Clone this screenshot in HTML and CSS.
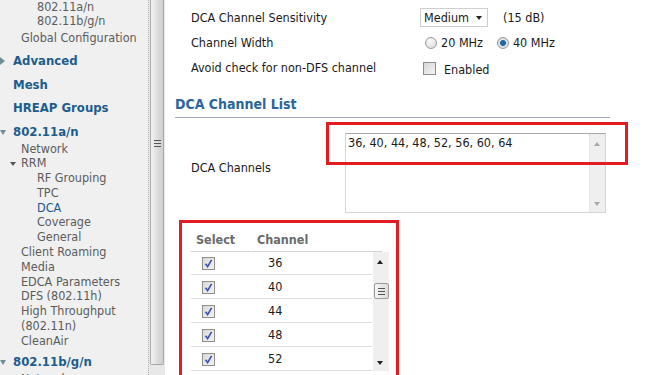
FILE: index.html
```html
<!DOCTYPE html>
<html lang="en">
<head>
    <meta charset="UTF-8">
    <meta name="viewport" content="width=device-width, initial-scale=1.0">
    <title>802.11a/n &gt; RRM &gt; DCA</title>
    <link rel="stylesheet" href="styles.css">
</head>
<body>
    <div class="frame">
        <div class="nav">
            <div class="nav-list">
                <div class="nav-item l3">802.11a/n</div>
                <div class="nav-item l3">802.11b/g/n</div>
                <div class="nav-item l2 global">Global Configuration</div>
                <div class="nav-head first closed">Advanced</div>
                <div class="nav-head">Mesh</div>
                <div class="nav-head">HREAP Groups</div>
                <div class="nav-head open">802.11a/n</div>
                <div class="nav-item l2">Network</div>
                <div class="nav-item l2 sub-open">RRM</div>
                <div class="nav-item l3">RF Grouping</div>
                <div class="nav-item l3">TPC</div>
                <div class="nav-item l3 current">DCA</div>
                <div class="nav-item l3">Coverage</div>
                <div class="nav-item l3">General</div>
                <div class="nav-item l2">Client Roaming</div>
                <div class="nav-item l2">Media</div>
                <div class="nav-item l2">EDCA Parameters</div>
                <div class="nav-item l2">DFS (802.11h)</div>
                <div class="nav-item l2 wrap">High Throughput (802.11n)</div>
                <div class="nav-item l2">CleanAir</div>
                <div class="nav-head open">802.11b/g/n</div>
                <div class="nav-item l2">Network</div>
            </div>
        </div>

        <div class="nav-scroll">
            <div class="nav-thumb"><span class="grip"></span></div>
        </div>

        <div class="main">
            <div class="form-row">
                <div class="label">DCA Channel Sensitivity</div>
                <div class="control">
                    <span class="select">Medium<span class="caret"></span></span>
                    <span class="note">(15 dB)</span>
                </div>
            </div>
            <div class="form-row">
                <div class="label">Channel Width</div>
                <div class="control">
                    <span class="radio"></span><span class="opt">20 MHz</span>
                    <span class="radio checked"></span><span class="opt">40 MHz</span>
                </div>
            </div>
            <div class="form-row">
                <div class="label">Avoid check for non-DFS channel</div>
                <div class="control">
                    <span class="check"></span><span class="opt wide">Enabled</span>
                </div>
            </div>

            <div class="section-title">DCA Channel List</div>

            <div class="channels-row">
                <div class="label">DCA Channels</div>
                <div class="textarea-wrap">
                    <div class="textarea">
                        <div class="ta-text">36, 40, 44, 48, 52, 56, 60, 64</div>
                        <div class="ta-scroll">
                            <span class="arrow up dim"></span>
                            <span class="arrow down dim"></span>
                        </div>
                    </div>
                    <div class="highlight"></div>
                </div>
            </div>

            <div class="channel-box">
                <div class="ch-head">
                    <div class="ch-col sel">Select</div>
                    <div class="ch-col num">Channel</div>
                </div>
                <div class="ch-body">
                    <div class="ch-list">
                        <div class="ch-rows">
                            <div class="ch-row"><div class="sel"><span class="check on"><svg viewBox="0 0 13 13" width="13" height="13"><path d="M3.5 6.8 L5.6 9.6 L9.6 2.8" fill="none" stroke="#3452b4" stroke-width="1.6"/></svg></span></div><div class="num">36</div></div>
                            <div class="ch-row"><div class="sel"><span class="check on"><svg viewBox="0 0 13 13" width="13" height="13"><path d="M3.5 6.8 L5.6 9.6 L9.6 2.8" fill="none" stroke="#3452b4" stroke-width="1.6"/></svg></span></div><div class="num">40</div></div>
                            <div class="ch-row"><div class="sel"><span class="check on"><svg viewBox="0 0 13 13" width="13" height="13"><path d="M3.5 6.8 L5.6 9.6 L9.6 2.8" fill="none" stroke="#3452b4" stroke-width="1.6"/></svg></span></div><div class="num">44</div></div>
                            <div class="ch-row"><div class="sel"><span class="check on"><svg viewBox="0 0 13 13" width="13" height="13"><path d="M3.5 6.8 L5.6 9.6 L9.6 2.8" fill="none" stroke="#3452b4" stroke-width="1.6"/></svg></span></div><div class="num">48</div></div>
                            <div class="ch-row"><div class="sel"><span class="check on"><svg viewBox="0 0 13 13" width="13" height="13"><path d="M3.5 6.8 L5.6 9.6 L9.6 2.8" fill="none" stroke="#3452b4" stroke-width="1.6"/></svg></span></div><div class="num">52</div></div>
                        </div>
                    </div>
                    <div class="ch-scroll">
                        <span class="arrow up"></span>
                        <span class="ch-thumb"><span class="grip"></span></span>
                        <span class="arrow down"></span>
                    </div>
                </div>
            </div>
        </div>
    </div>
</body>
</html>
```

FILE: styles.css
```css
* {
    box-sizing: border-box;
}

html, body {
    margin: 0;
    height: 375px;
    overflow: hidden;
}

body {
    font-family: "DejaVu Sans Condensed", "DejaVu Sans", sans-serif;
    font-size: 12.5px;
    color: #1a1a1a;
    background: #fff;
}

.frame {
    display: flex;
    height: 375px;
}

/* left navigation */
.nav {
    width: 148px;
    flex: none;
    background: #f0f0f0;
    color: #5c5c5c;
    overflow: hidden;
}

.nav-list {
    margin-top: -0.4px;
}

.nav-item {
    line-height: 14.8px;
    position: relative;
}

.nav-item.l2 {
    padding-left: 21px;
}

.nav-item.l3 {
    padding-left: 37px;
}

.nav-item.global {
    margin-top: 2px;
}

.nav-item.current {
    color: #21598c;
}

.nav-item.wrap {
    padding-right: 20px;
}

.nav-item.sub-open::before {
    content: "";
    position: absolute;
    left: 10px;
    top: 6px;
    border-left: 3px solid transparent;
    border-right: 3px solid transparent;
    border-top: 4px solid #555;
}

.nav-head {
    position: relative;
    font-weight: bold;
    font-size: 13px;
    color: #1d5d8d;
    line-height: 20px;
    margin-top: 3.5px;
    padding-left: 13px;
}

.nav-head.first {
    margin-top: 5px;
}

.nav-head.closed::before {
    content: "";
    position: absolute;
    left: 0;
    top: 6px;
    border-top: 4px solid transparent;
    border-bottom: 4px solid transparent;
    border-left: 5px solid #6f8e97;
}

.nav-head.open::before {
    content: "";
    position: absolute;
    left: 0;
    top: 8px;
    border-left: 3.5px solid transparent;
    border-right: 3.5px solid transparent;
    border-top: 5px solid #6f8e97;
}

/* nav frame scrollbar */
.nav-scroll {
    width: 17px;
    flex: none;
    border-left: 1px dotted #b4b4b4;
    background: #e8e8e8;
    padding-left: 1px;
}

.nav-thumb {
    display: flex;
    justify-content: center;
    width: 14px;
    height: 365px;
    padding-top: 140px;
    border: 1px solid #a9a9a9;
    border-top: none;
    border-radius: 0 0 2px 2px;
    background: linear-gradient(to right, #f3f3f3, #dadada 60%, #cfcfcf);
}

.grip {
    display: block;
    width: 7px;
    height: 7px;
    border-top: 1px solid #555;
    border-bottom: 1px solid #555;
    background: linear-gradient(#555, #555) 0 2px / 7px 1px no-repeat;
}

/* content */
.main {
    flex: 1;
    padding-top: 5px;
}

.form-row {
    display: flex;
    align-items: center;
    height: 25px;
    padding-left: 26px;
}

.form-row .label {
    width: 229px;
    flex: none;
}

.control {
    display: flex;
    align-items: center;
}

.select {
    display: flex;
    align-items: center;
    justify-content: space-between;
    width: 68px;
    height: 19px;
    padding: 0 3px 0 3px;
    border: 1px solid #cfcfcf;
    background: #fff;
}

.caret {
    border-left: 3.5px solid transparent;
    border-right: 3.5px solid transparent;
    border-top: 4px solid #222;
    margin-right: 2px;
}

.note {
    margin-left: 15px;
}

.radio {
    width: 12px;
    height: 12px;
    margin-left: 5px;
    border-radius: 50%;
    border: 1px solid #9b9b9b;
    background: radial-gradient(circle at 40% 35%, #fafafa, #d6d6d6);
}

.radio.checked {
    margin-left: 14px;
    background: radial-gradient(circle, #1c6aa6 0 2.5px, #7fa8c8 3px, #e4e4e4 3.5px, #cfcfcf);
}

.opt {
    margin-left: 4px;
}

.opt.wide {
    margin-left: 8px;
    margin-top: 4px;
}

.check {
    display: block;
    width: 13px;
    height: 13px;
    margin-left: 3px;
    margin-top: 2px;
    border: 1px solid #8e8e8e;
    background: linear-gradient(135deg, #d8d8d8, #f4f4f4);
}

.check svg {
    display: block;
    margin: -1px;
}

.section-title {
    width: 435px;
    margin: 15px 0 0 10px;
    line-height: 18px;
    padding-bottom: 4px;
    border-bottom: 1px solid #a3a6c4;
    font-weight: bold;
    font-size: 14px;
    color: #2a659a;
}

.channels-row {
    display: flex;
    margin-top: 15px;
    padding-left: 26px;
}

.channels-row .label {
    width: 154px;
    flex: none;
    padding-top: 27px;
    line-height: 16px;
}

.textarea-wrap {
    position: relative;
}

.textarea {
    display: flex;
    justify-content: space-between;
    width: 261px;
    height: 80px;
    border: 1px solid #d6d6d6;
    border-top-color: #a8a8a8;
}

.ta-text {
    padding: 1px 0 0 2px;
    line-height: 16px;
}

.ta-scroll {
    position: relative;
    width: 16px;
    background: #efefef;
    border-left: 1px dotted #dcdcdc;
}

.highlight {
    position: absolute;
    left: -19px;
    top: -11px;
    width: 302px;
    height: 43px;
    border: 3px solid #e31b23;
}

.arrow {
    position: absolute;
    left: 4px;
    border-left: 3.5px solid transparent;
    border-right: 3.5px solid transparent;
}

.arrow.up {
    top: 8px;
    border-bottom: 4px solid #222;
}

.arrow.down {
    bottom: 6px;
    border-top: 4px solid #222;
}

.arrow.dim.up {
    border-bottom-color: #a8a8a8;
}

.arrow.dim.down {
    border-top-color: #a8a8a8;
}

/* channel table */
.channel-box {
    width: 220px;
    height: 170px;
    margin: 7px 0 0 14px;
    padding: 8px 0 0 9px;
    border: 3px solid #e31b23;
}

.ch-head {
    display: flex;
    gap: 1px;
}

.ch-col {
    height: 21px;
    line-height: 18px;
    padding-left: 5px;
    border-bottom: 1px solid #d2d2d2;
    font-weight: bold;
    color: #6b6b6b;
}

.ch-col.sel {
    width: 60px;
}

.ch-col.num {
    width: 130px;
}

.ch-body {
    display: flex;
    height: 119px;
}

.ch-list {
    width: 181px;
    overflow: hidden;
}

.ch-rows {
    margin-top: -1px;
}

.ch-row {
    display: flex;
    align-items: center;
    height: 24px;
    border-bottom: 1px solid #dedede;
}

.ch-row .sel {
    width: 61px;
    padding-left: 8px;
}

.ch-row .num {
    padding-left: 16px;
}

.ch-scroll {
    position: relative;
    width: 16px;
    margin-left: 1px;
    background: #efefef;
}

.ch-thumb {
    position: absolute;
    left: 1px;
    top: 31px;
    width: 15px;
    height: 16px;
    display: flex;
    align-items: center;
    justify-content: center;
    border: 1px solid #9c9c9c;
    border-radius: 2px;
    background: linear-gradient(to right, #f6f6f6, #dcdcdc);
}
```
